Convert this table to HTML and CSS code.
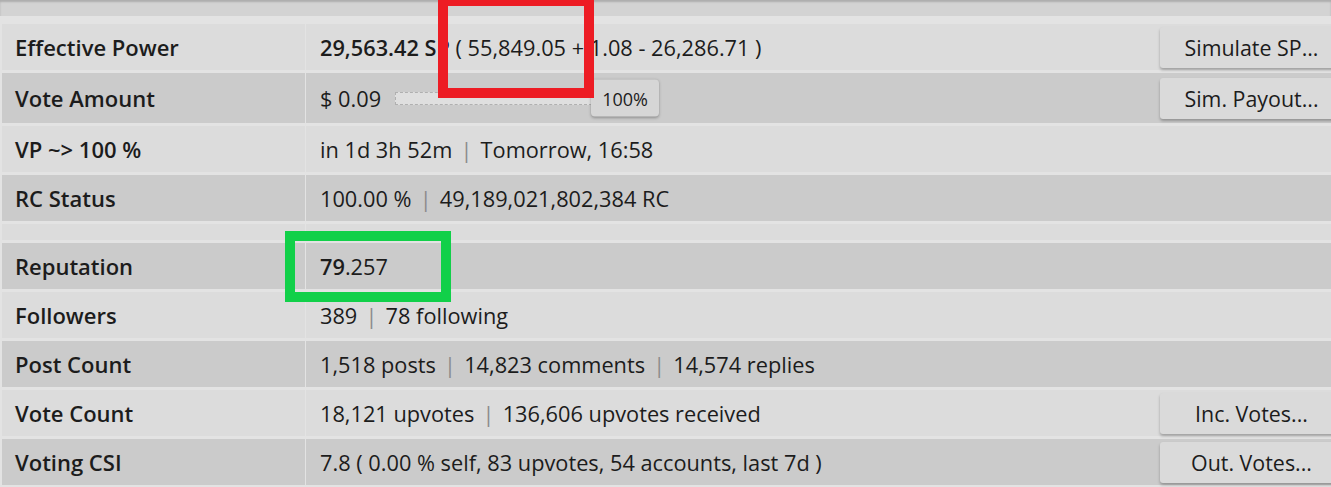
FILE: index.html
```html
<!DOCTYPE html>
<html>
<head>
<meta charset="utf-8">
<link rel="stylesheet" href="styles.css">
</head>
<body>
<div class="topbar"></div>
<table class="stats">
  <tr class="light">
    <th>Effective Power</th>
    <td><div class="val"><span><b>29,563.42 SP</b> ( 55,849.05 + 1.08 - 26,286.71 )</span><button class="btn">Simulate SP...</button></div></td>
  </tr>
  <tr class="dark tall">
    <th>Vote Amount</th>
    <td><div class="val"><span>$ 0.09</span><span class="bar"><span class="tip">100%</span></span><button class="btn">Sim. Payout...</button></div></td>
  </tr>
  <tr class="light">
    <th>VP ~&gt; 100 %</th>
    <td><div class="val"><span>in 1d 3h 52m <span class="sep">|</span> Tomorrow, 16:58</span></div></td>
  </tr>
  <tr class="dark">
    <th>RC Status</th>
    <td><div class="val"><span>100.00 % <span class="sep">|</span> 49,189,021,802,384 RC</span></div></td>
  </tr>
  <tr class="light blank">
    <th></th>
    <td></td>
  </tr>
  <tr class="dark">
    <th>Reputation</th>
    <td><div class="val"><span><b>79</b>.257</span></div></td>
  </tr>
  <tr class="light">
    <th>Followers</th>
    <td><div class="val"><span>389 <span class="sep">|</span> 78 following</span></div></td>
  </tr>
  <tr class="dark">
    <th>Post Count</th>
    <td><div class="val"><span>1,518 posts <span class="sep">|</span> 14,823 comments <span class="sep">|</span> 14,574 replies</span></div></td>
  </tr>
  <tr class="light">
    <th>Vote Count</th>
    <td><div class="val"><span>18,121 upvotes <span class="sep">|</span> 136,606 upvotes received</span><button class="btn">Inc. Votes...</button></div></td>
  </tr>
  <tr class="dark">
    <th>Voting CSI</th>
    <td><div class="val"><span>7.8 ( 0.00 % self, 83 upvotes, 54 accounts, last 7d )</span><button class="btn">Out. Votes...</button></div></td>
  </tr>
</table>
<div class="mark red"></div>
<div class="mark green"></div>
</body>
</html>
```
FILE: styles.css
```css
html, body {
  margin: 0;
  padding: 0;
  overflow: hidden;
}
body {
  background: #e3e3e3;
  font-family: "Open Sans", "DejaVu Sans", sans-serif;
  font-size: 22px;
  color: #1c1c1c;
  position: relative;
  width: 1331px;
  height: 487px;
}
.topbar {
  height: 16px;
  background: #d3d3d3;
  box-shadow: inset 0 2px 2px rgba(0, 0, 0, 0.18);
}
.stats {
  margin: 5px 0 0 1px;
  width: 1345px;
  border-spacing: 1px 3px;
  table-layout: fixed;
}
.stats th {
  width: 303px;
  box-sizing: border-box;
  padding: 0 13px;
  text-align: left;
  font-weight: 600;
  height: 46px;
}
.stats td {
  padding: 0 2px 0 14px;
  height: 46px;
  font-size: 21.75px;
}
.stats tr.tall th, .stats tr.tall td { height: 50px; }
.stats tr.blank th, .stats tr.blank td { height: 16px; }
.light th, .light td { background: #dcdcdc; }
.dark th, .dark td { background: #cbcbcb; }
.val {
  display: flex;
  align-items: center;
  white-space: nowrap;
}
.val b { font-weight: 600; }
.sep {
  color: #8c8c8c;
  margin: 0 2.5px;
}
.bar {
  position: relative;
  width: 195px;
  height: 11px;
  margin-left: 14px;
  border: 1px dashed #b0b0b0;
  background: #dfdfdf;
}
.tip {
  position: absolute;
  left: 195px;
  top: 50%;
  transform: translateY(-50%);
  width: 68px;
  height: 37px;
  box-sizing: border-box;
  display: flex;
  align-items: center;
  justify-content: center;
  font-size: 18px;
  background: #d6d6d6;
  border-radius: 4px;
  box-shadow: 0 1px 3px rgba(0, 0, 0, 0.3);
}
.btn {
  margin-left: auto;
  width: 183px;
  height: 41px;
  border: none;
  border-radius: 3px;
  background: #dadada;
  box-shadow: 0 2px 3px rgba(0, 0, 0, 0.28);
  font-family: inherit;
  font-size: 21.4px;
  color: #1c1c1c;
  padding: 0;
}
.mark {
  position: absolute;
  box-sizing: border-box;
  border: 10px solid;
}
.red {
  left: 438px;
  top: -4px;
  width: 156px;
  height: 102px;
  border-color: #ed1c24;
}
.green {
  left: 285px;
  top: 231px;
  width: 166px;
  height: 71px;
  border-color: #11d049;
}
```
